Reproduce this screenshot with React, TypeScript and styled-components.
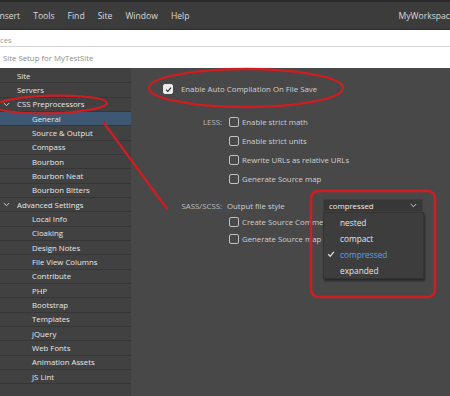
import React from 'react';
import styled, { createGlobalStyle } from 'styled-components';

const Global = createGlobalStyle`
  html, body { margin: 0; padding: 0; background: #484848; }
  body { width: 450px; height: 396px; overflow: hidden; font-family: "Open Sans", "Noto Sans", sans-serif; }
  * { box-sizing: border-box; }
`;

const Page = styled.div`
  position: relative;
  width: 450px;
  height: 396px;
  overflow: hidden;
  display: flex;
  flex-direction: column;
  background: #484848;
`;

const MenuBar = styled.div`
  flex: none;
  height: 30px;
  background: #3c3c3c;
  border-top: 2px solid #2a2a2a;
  border-bottom: 1px solid #2e2e2e;
  display: flex;
  align-items: center;
  color: #dadada;
  font-size: 8.6px;
  white-space: nowrap;
  overflow: hidden;
`;

const MenuItems = styled.div`
  display: flex;
  align-items: center;
  gap: 13px;
  margin-left: -3px;
`;

const MenuSep = styled.div<{ $ml: number }>`
  width: 1px;
  height: 20px;
  background: #2a2a2a;
  box-shadow: 1px 0 0 #464646;
  margin-left: ${(p) => p.$ml}px;
`;

const Workspace = styled.span`
  margin-left: 8px;
`;

const CrumbStrip = styled.div`
  flex: none;
  height: 17px;
  background: #ffffff;
  border-bottom: 1px solid #d6d6d6;
  color: #9a9a9a;
  font-size: 7.8px;
  display: flex;
  align-items: flex-end;
  padding-bottom: 1px;
  overflow: hidden;
`;

const TitleStrip = styled.div`
  flex: none;
  height: 21px;
  background: #ffffff;
  color: #8c8c8c;
  font-size: 7.8px;
  display: flex;
  align-items: center;
  padding-left: 3px;
`;

const Body = styled.div`
  flex: 1;
  display: flex;
  min-height: 0;
`;

const Sidebar = styled.div`
  width: 131px;
  flex: none;
  background: #414141;
  padding-top: 1px;
  display: flex;
  flex-direction: column;
`;

const NavRow = styled.div<{ $level: number; $selected?: boolean }>`
  height: 14.33px;
  flex: none;
  display: flex;
  align-items: center;
  padding-left: ${(p) => (p.$level ? 32 : 3)}px;
  border-bottom: 1px solid #363636;
  background: ${(p) => (p.$selected ? '#3e5873' : 'transparent')};
  color: #e8e8e8;
  font-size: 7.8px;
  white-space: nowrap;
`;

const Twisty = styled.span`
  width: 14px;
  flex: none;
  display: flex;
  align-items: center;
`;

const Main = styled.div`
  flex: 1;
  display: flex;
  flex-direction: column;
  padding-top: 14px;
  color: #d0d0d0;
  font-size: 7.8px;
  white-space: nowrap;
`;

const TopRow = styled.div`
  height: 14px;
  display: flex;
  align-items: center;
  padding-left: 32px;
  gap: 8px;
  margin-bottom: 16px;
`;

const OptRow = styled.div<{ $h: number; $mt?: number }>`
  height: ${(p) => p.$h}px;
  margin-top: ${(p) => p.$mt || 0}px;
  display: flex;
  align-items: center;
`;

const OptLabel = styled.span`
  width: 91px;
  flex: none;
  text-align: right;
  color: #bdbdbd;
  margin-right: 7px;
`;

const CheckLine = styled.label`
  display: flex;
  align-items: center;
  gap: 3px;
`;

const Box = styled.span<{ $checked?: boolean }>`
  width: 10px;
  height: 10px;
  flex: none;
  border-radius: 2px;
  border: 1px solid ${(p) => (p.$checked ? '#ececec' : '#c2c2c2')};
  background: ${(p) => (p.$checked ? '#ececec' : 'transparent')};
  display: flex;
  align-items: center;
  justify-content: center;
`;

const StyleText = styled.span`
  width: 96px;
  flex: none;
  margin-left: -2px;
`;

const SelectWrap = styled.div`
  position: relative;
  width: 100px;
`;

const SelectBox = styled.div`
  height: 13px;
  background: #373737;
  border: 1px solid #3f3f3f;
  display: flex;
  align-items: center;
  justify-content: space-between;
  padding: 0 5px 0 5px;
  color: #f0f0f0;
  font-size: 7.8px;
`;

const Menu = styled.div`
  position: absolute;
  left: 0;
  top: 100%;
  width: 101px;
  height: 67px;
  background: #3d3d3d;
  border: 1px solid #333;
  box-shadow: 1px 2px 2px rgba(0, 0, 0, 0.45);
  padding-top: 1px;
  display: flex;
  flex-direction: column;
  z-index: 5;
`;

const MenuOption = styled.div<{ $active?: boolean }>`
  height: 16.4px;
  display: flex;
  align-items: center;
  padding-left: 3px;
  color: ${(p) => (p.$active ? '#5aa2e6' : '#e6e6e6')};
  font-size: 8.3px;
`;

const CheckCol = styled.span`
  width: 13px;
  flex: none;
  display: flex;
  align-items: center;
`;

const Annotations = styled.svg`
  position: absolute;
  left: 0;
  top: 0;
  pointer-events: none;
  z-index: 10;
`;

const Chevron = () => (
  <svg width="7" height="5" viewBox="0 0 7 5">
    <path d="M0.8 1 L3.5 3.7 L6.2 1" fill="none" stroke="#cfcfcf" strokeWidth="1" />
  </svg>
);

const Tick = ({ color, size = 8 }: { color: string; size?: number }) => (
  <svg width={size} height={size} viewBox="0 0 8 8">
    <path d="M1.2 4.2 L3.2 6.2 L6.9 1.8" fill="none" stroke={color} strokeWidth="1.3" />
  </svg>
);

type NavItem = { label: string; level: number; expanded?: boolean; selected?: boolean };

const nav: NavItem[] = [
  { label: 'Site', level: 0 },
  { label: 'Servers', level: 0 },
  { label: 'CSS Preprocessors', level: 0, expanded: true },
  { label: 'General', level: 1, selected: true },
  { label: 'Source & Output', level: 1 },
  { label: 'Compass', level: 1 },
  { label: 'Bourbon', level: 1 },
  { label: 'Bourbon Neat', level: 1 },
  { label: 'Bourbon Bitters', level: 1 },
  { label: 'Advanced Settings', level: 0, expanded: true },
  ...[
    'Local Info',
    'Cloaking',
    'Design Notes',
    'File View Columns',
    'Contribute',
    'PHP',
    'Bootstrap',
    'Templates',
    'jQuery',
    'Web Fonts',
    'Animation Assets',
    'JS Lint',
  ].map((label) => ({ label, level: 1 })),
];

const Check = ({ label, checked }: { label: string; checked?: boolean }) => (
  <CheckLine>
    <Box $checked={checked}>{checked && <Tick color="#2b2b2b" size={7} />}</Box>
    <span>{label}</span>
  </CheckLine>
);

export default function App() {
  return (
    <Page>
      <Global />
      <MenuBar>
        <MenuItems>
          {['Insert', 'Tools', 'Find', 'Site', 'Window', 'Help'].map((m) => (
            <span key={m}>{m}</span>
          ))}
        </MenuItems>
        <MenuSep $ml={12} />
        <MenuSep $ml={189} />
        <Workspace>MyWorkspace</Workspace>
      </MenuBar>
      <CrumbStrip>ces</CrumbStrip>
      <TitleStrip>Site Setup for MyTestSite</TitleStrip>
      <Body>
        <Sidebar>
          {nav.map((n) => (
            <NavRow key={n.label} $level={n.level} $selected={n.selected}>
              {n.level === 0 && <Twisty>{n.expanded && <Chevron />}</Twisty>}
              {n.label}
            </NavRow>
          ))}
        </Sidebar>
        <Main>
          <TopRow>
            <Box $checked>
              <Tick color="#2b2b2b" size={7} />
            </Box>
            <span>Enable Auto Compilation On File Save</span>
          </TopRow>
          <OptRow $h={19}>
            <OptLabel>LESS:</OptLabel>
            <Check label="Enable strict math" />
          </OptRow>
          <OptRow $h={19}>
            <OptLabel />
            <Check label="Enable strict units" />
          </OptRow>
          <OptRow $h={19}>
            <OptLabel />
            <Check label="Rewrite URLs as relative URLs" />
          </OptRow>
          <OptRow $h={19}>
            <OptLabel />
            <Check label="Generate Source map" />
          </OptRow>
          <OptRow $h={17} $mt={9}>
            <OptLabel>SASS/SCSS:</OptLabel>
            <StyleText>Output file style</StyleText>
            <SelectWrap>
              <SelectBox>
                <span>compressed</span>
                <Chevron />
              </SelectBox>
              <Menu>
                <MenuOption>
                  <CheckCol />
                  nested
                </MenuOption>
                <MenuOption>
                  <CheckCol />
                  compact
                </MenuOption>
                <MenuOption $active>
                  <CheckCol>
                    <Tick color="#d8d8d8" size={8} />
                  </CheckCol>
                  compressed
                </MenuOption>
                <MenuOption>
                  <CheckCol />
                  expanded
                </MenuOption>
              </Menu>
            </SelectWrap>
          </OptRow>
          <OptRow $h={16}>
            <OptLabel />
            <Check label="Create Source Comments" />
          </OptRow>
          <OptRow $h={18}>
            <OptLabel />
            <Check label="Generate Source map" />
          </OptRow>
        </Main>
      </Body>
      <Annotations width="450" height="396" viewBox="0 0 450 396">
        <g fill="none" stroke="#cf1d22" strokeLinecap="round">
          <ellipse cx="51" cy="104.5" rx="56" ry="8.8" transform="rotate(-1.5 51 104.5)" strokeWidth="2.2" />
          <ellipse cx="246" cy="88" rx="97" ry="19" strokeWidth="2.3" />
          <line x1="104" y1="123" x2="167" y2="209" strokeWidth="2.2" />
          <rect x="311" y="191" width="124" height="106" rx="7" strokeWidth="2.6" />
        </g>
      </Annotations>
    </Page>
  );
}
